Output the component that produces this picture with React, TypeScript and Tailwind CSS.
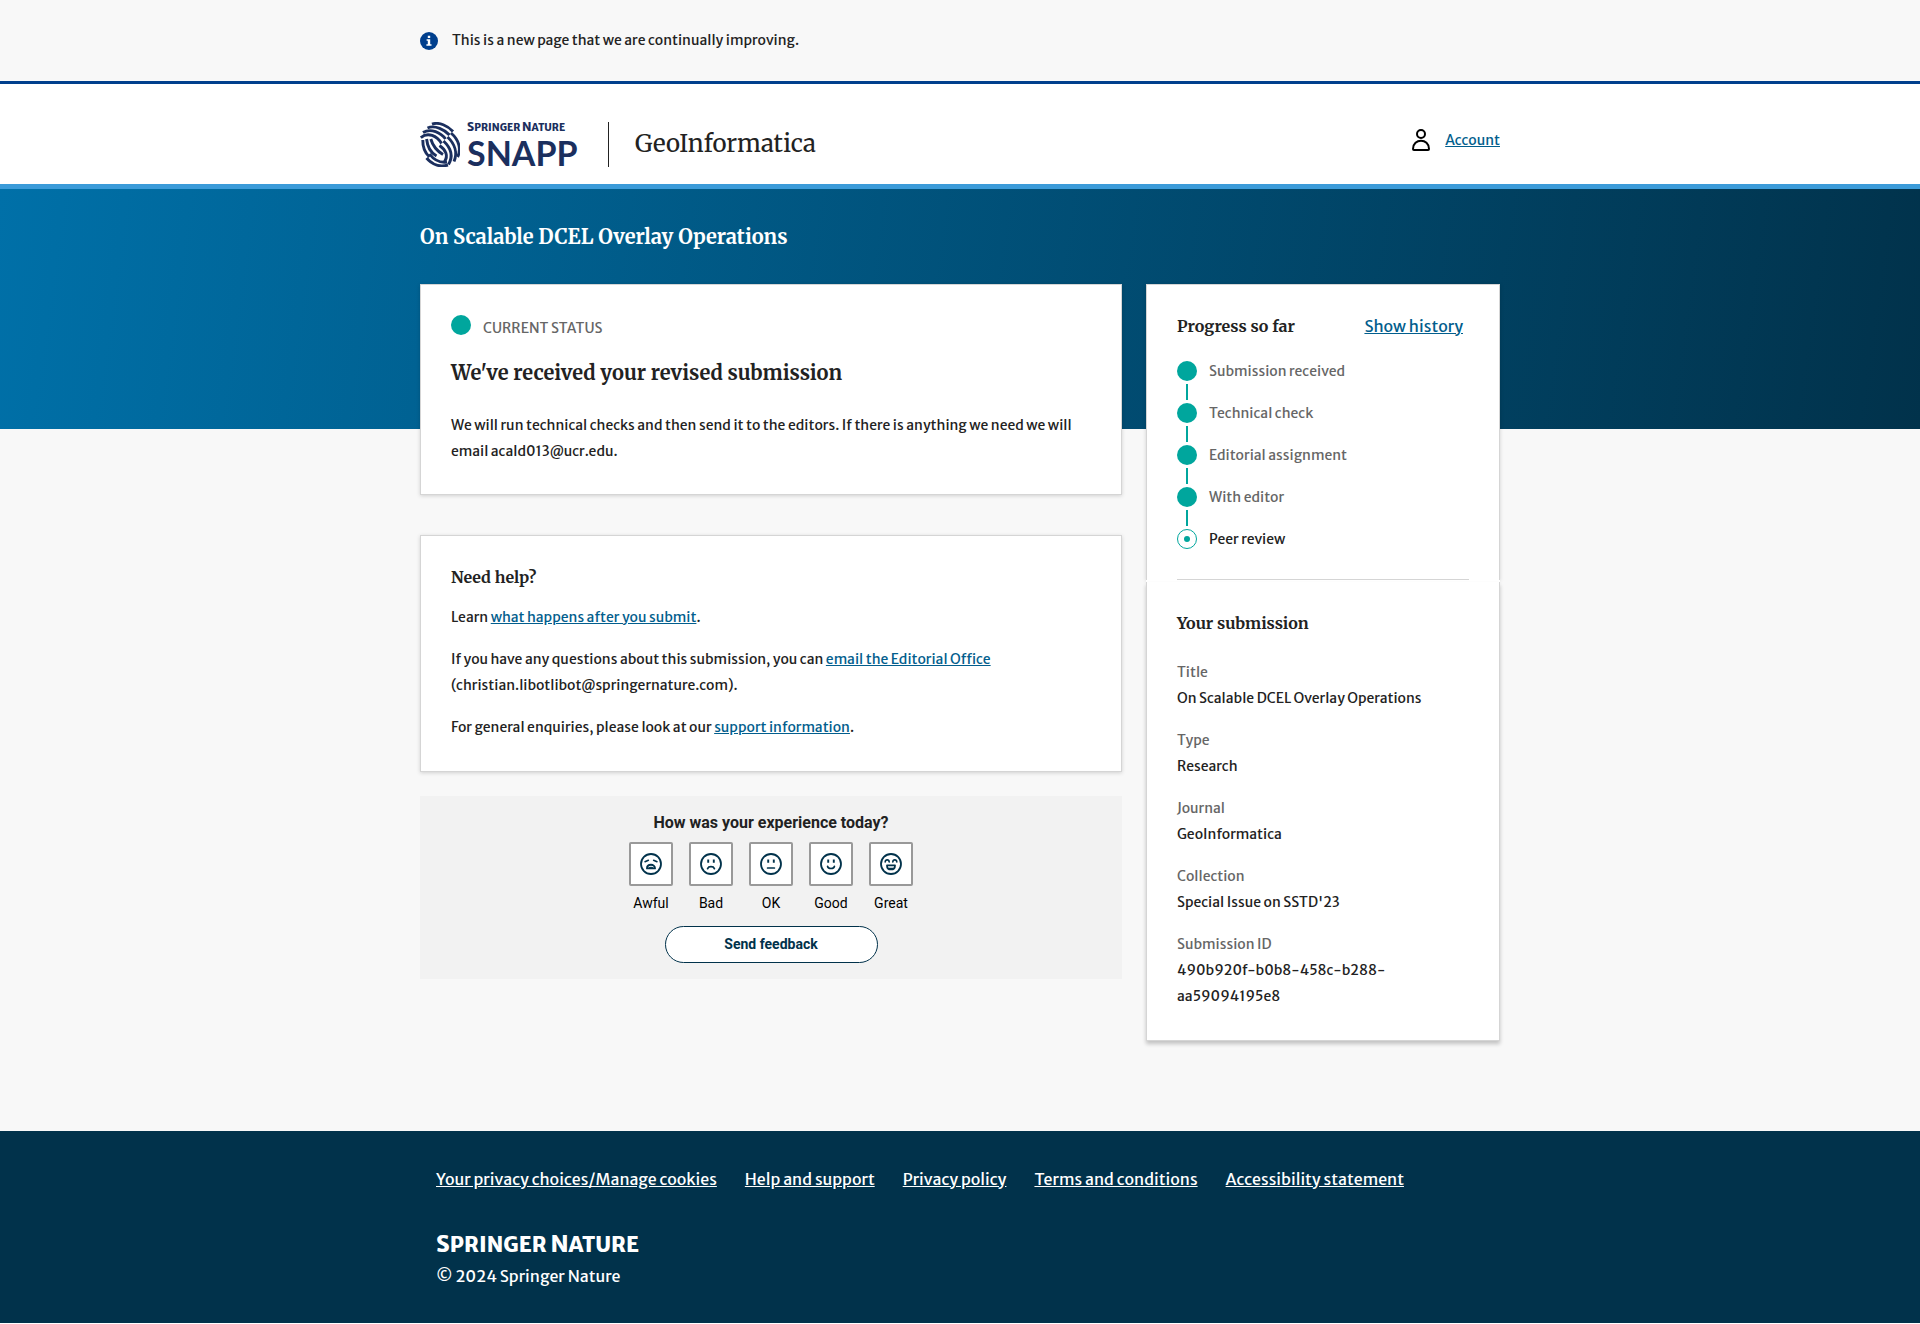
import type { ReactNode } from "react";

const steps = ["Submission received", "Technical check", "Editorial assignment", "With editor", "Peer review"];

const details = [
  { label: "Title", value: "On Scalable DCEL Overlay Operations" },
  { label: "Type", value: "Research" },
  { label: "Journal", value: "GeoInformatica" },
  { label: "Collection", value: "Special Issue on SSTD'23" },
  { label: "Submission ID", value: "490b920f-b0b8-458c-b288-aa59094195e8" },
];

const footerLinks = [
  "Your privacy choices/Manage cookies",
  "Help and support",
  "Privacy policy",
  "Terms and conditions",
  "Accessibility statement",
];

const moods: { name: string; face: ReactNode }[] = [
  {
    name: "Awful",
    face: (
      <>
        <path d="M5 8.8 L8.4 7.2 M17 8.8 L13.6 7.2" strokeWidth="1.5" />
        <path d="M7 15.4 C7 10.6 15 10.6 15 15.4 Z" strokeWidth="1.9" />
        <path d="M9 15.2 C10 13.9 12 13.9 13 15.2" strokeWidth="1.2" />
      </>
    ),
  },
  {
    name: "Bad",
    face: (
      <>
        <path d="M8.2 6.6 V9.8 M13.8 6.6 V9.8" strokeWidth="1.9" strokeLinecap="butt" />
        <path d="M7.6 15.6 C8.6 13 13.4 13 14.4 15.6" strokeWidth="1.7" />
      </>
    ),
  },
  {
    name: "OK",
    face: (
      <>
        <path d="M8.2 6.6 V9.8 M13.8 6.6 V9.8" strokeWidth="1.9" strokeLinecap="butt" />
        <path d="M7.6 15 H14.4" strokeWidth="1.7" />
      </>
    ),
  },
  {
    name: "Good",
    face: (
      <>
        <path d="M8.2 6.6 V9.8 M13.8 6.6 V9.8" strokeWidth="1.9" strokeLinecap="butt" />
        <path d="M7.6 13.4 C8.4 16.2 13.6 16.2 14.4 13.4" strokeWidth="1.7" />
      </>
    ),
  },
  {
    name: "Great",
    face: (
      <>
        <path d="M5.2 9 C5.4 6.2 9 6.2 9.2 9 M12.8 9 C13 6.2 16.6 6.2 16.8 9" strokeWidth="1.6" />
        <path d="M7 12.4 H15 C15 17.8 7 17.8 7 12.4 Z" strokeWidth="1.8" />
        <path d="M9 15.4 H13" strokeWidth="1.2" />
      </>
    ),
  },
];

function InfoIcon() {
  return (
    <svg width="18" height="18" viewBox="0 0 18 18" aria-hidden="true">
      <circle cx="9" cy="9" r="9" fill="#003f8d" />
      <path d="M7.8 3.8 H10.2 V5.9 H7.8 Z M6.6 7.2 H10.2 V12.2 H11.5 V13.8 H6.4 V12.2 H7.8 V8.8 H6.6 Z" fill="#fff" />
    </svg>
  );
}

function UserIcon() {
  return (
    <svg width="18" height="22" viewBox="0 0 18 22" fill="none" stroke="#000" strokeWidth="2" aria-hidden="true">
      <circle cx="9" cy="5" r="4" />
      <path d="M1 20 C1 9 17 9 17 20 Q17 21 16 21 H2 Q1 21 1 20 Z" />
    </svg>
  );
}

function Globe() {
  return (
    <svg width="40" height="45" viewBox="0 0 40 45" fill="none" stroke="#1b2f5e" strokeWidth="2.9" aria-hidden="true">
      <path d="M12 2.2 C19 -0.5 28 4 33 9.5" />
      <path d="M7.5 6 C15 2.6 25 8 29.5 13" />
      <path d="M3 10.6 C11 5.6 21 11 25.5 17" />
      <path d="M0.8 15.6 C8 9.6 17 14 21.5 21.5" />
      <path d="M31 11 C39 18 41.5 27 37.6 35" />
      <path d="M27.5 15 C35 22 37.6 31 34 39.5" />
      <path d="M23.5 19 C31 26 33.5 34 28.5 42.5" />
      <path d="M19.5 23.5 C26 28 28.5 34 24.5 39.5" />
      <path d="M2.8 18 C2.6 26 5 31 9.5 35" />
      <path d="M6.6 17 C7.4 25 11 31 16.5 34" />
      <path d="M10.8 17 C12.5 23 17 29 23 32.5" />
      <path d="M6.5 36 C12 42.5 20 45.5 28 43" />
      <path d="M9.5 32 C14 38 20 41 27 40" />
    </svg>
  );
}

function Card({ children, className = "" }: { children: ReactNode; className?: string }) {
  return (
    <section className={`border border-[#d5d5d5] bg-white px-[30px] shadow-[0_1px_4px_rgba(0,0,0,0.16)] ${className}`}>
      {children}
    </section>
  );
}

function Link({ children }: { children: ReactNode }) {
  return (
    <a href="#" className="text-[#025e8d] underline">
      {children}
    </a>
  );
}

function ProgressSteps() {
  return (
    <ol className="mt-[23px] text-[14px] leading-5">
      {steps.map((step, i) => {
        const last = i === steps.length - 1;
        return (
          <li key={step} className="flex gap-3">
            <span className="flex flex-col items-center">
              {last ? (
                <span className="flex size-5 items-center justify-center rounded-full border border-[#00a69d]">
                  <span className="size-[6px] rounded-full bg-[#00a69d]" />
                </span>
              ) : (
                <>
                  <span className="size-5 rounded-full bg-[#00a69d]" />
                  <span className="my-[3px] h-4 w-[2px] bg-[#00a69d]" />
                </>
              )}
            </span>
            <span className={last ? "text-[#222]" : "text-[#666]"}>{step}</span>
          </li>
        );
      })}
    </ol>
  );
}

export default function App() {
  return (
    <div className="bg-[#f8f8f8] font-['Merriweather_Sans','Noto_Sans',sans-serif] text-[#222]">
      <div className="border-b-[3px] border-[#003f8d]">
        <div className="mx-auto flex h-[81px] max-w-[1080px] items-center gap-[14px] text-[14px]">
          <InfoIcon />
          <p>This is a new page that we are continually improving.</p>
        </div>
      </div>

      <header className="border-b-[5px] border-[#3b9bd9] bg-white">
        <div className="mx-auto flex h-[100px] max-w-[1080px] items-start pt-[38px]">
          <a href="#" aria-label="Springer Nature SNAPP" className="flex gap-[7px] text-[#1b2f5e]">
            <Globe />
            <span className="flex w-[110px] flex-col font-bold">
              <span className="text-[10px] leading-[10px] font-extrabold whitespace-nowrap">
                <span className="text-[12px]">S</span>PRINGER <span className="text-[12px]">N</span>ATURE
              </span>
              <span className="font-['Lato',sans-serif] text-[34px] leading-[40px]">SNAPP</span>
            </span>
          </a>
          <span className="ml-[31px] h-[45px] w-px bg-[#222]" />
          <span className="ml-[26px] font-['Merriweather',serif] text-[24px] leading-[44px]">GeoInformatica</span>
          <a href="#" className="mt-[7px] ml-auto flex items-center gap-[15px] text-[14px] leading-[22px] text-[#025e8d]">
            <UserIcon />
            <span className="underline">Account</span>
          </a>
        </div>
      </header>

      <div className="h-[240px] bg-linear-[98deg,#0070a8,#01324b]">
        <div className="mx-auto max-w-[1080px] pt-8">
          <h1 className="font-['Merriweather',serif] text-[20px] leading-8 font-bold text-white">
            On Scalable DCEL Overlay Operations
          </h1>
        </div>
      </div>

      <main className="mx-auto -mt-[145px] flex max-w-[1080px] items-start gap-6 pb-[90px]">
        <div className="flex min-w-0 flex-1 flex-col">
          <Card className="py-[30px]">
            <p className="flex items-start gap-3 text-[14px] leading-[26px] text-[#666]">
              <span className="size-5 rounded-full bg-[#00a69d]" />
              CURRENT STATUS
            </p>
            <h2 className="mt-4 font-['Merriweather',serif] text-[20px] leading-8 font-bold">
              We've received your revised submission
            </h2>
            <p className="mt-[23px] text-[14px] leading-[26px]">
              We will run technical checks and then send it to the editors. If there is anything we need we will email
              acald013@ucr.edu.
            </p>
          </Card>

          <Card className="mt-10 pt-[29px] pb-[31px]">
            <h2 className="font-['Merriweather',serif] text-[16px] leading-6 font-bold">Need help?</h2>
            <div className="mt-[15px] space-y-4 text-[14px] leading-[26px]">
              <p>
                Learn <Link>what happens after you submit</Link>.
              </p>
              <p>
                If you have any questions about this submission, you can <Link>email the Editorial Office</Link>{" "}
                (christian.libotlibot@springernature.com).
              </p>
              <p>
                For general enquiries, please look at our <Link>support information</Link>.
              </p>
            </div>
          </Card>

          <form className="mt-6 flex flex-col items-center bg-[#f2f2f2] py-4 font-['Roboto',sans-serif]">
            <fieldset className="flex flex-col items-center">
              <legend className="mx-auto text-[16px] leading-[22px] font-bold">How was your experience today?</legend>
              <div className="mt-2 flex">
                {moods.map((mood) => (
                  <label key={mood.name} className="flex w-[60px] flex-col items-center text-[14px] text-black">
                    <input type="radio" name="experience" className="sr-only" />
                    <span className="flex size-11 items-center justify-center rounded-[2px] border-2 border-[#999] bg-white">
                      <svg
                        width="22"
                        height="22"
                        viewBox="0 0 22 22"
                        fill="none"
                        stroke="#01324b"
                        strokeLinecap="round"
                        strokeLinejoin="round"
                        aria-hidden="true"
                      >
                        <circle cx="11" cy="11" r="10" strokeWidth="1.8" />
                        {mood.face}
                      </svg>
                    </span>
                    <span className="mt-[7px] leading-5">{mood.name}</span>
                  </label>
                ))}
              </div>
            </fieldset>
            <button
              type="button"
              className="mt-[13px] h-[37px] w-[213px] rounded-full border border-[#01324b] bg-white text-[14px] font-bold text-[#01324b]"
            >
              Send feedback
            </button>
          </form>
        </div>

        <aside className="w-[354px] shrink-0">
          <Card className="border-b-0 pt-[29px]">
            <div className="flex items-center justify-between pr-[6px]">
              <h2 className="font-['Merriweather',serif] text-[16px] leading-6 font-bold">Progress so far</h2>
              <button type="button" className="text-[16px] leading-6 text-[#025e8d] underline">
                Show history
              </button>
            </div>
            <ProgressSteps />
            <hr className="mt-[30px] border-[#d5d5d5]" />
          </Card>
          <div className="h-[2px] bg-white" />
          <Card className="border-t-0 pt-[29px] pb-[31px] shadow-[0_3px_4px_rgba(0,0,0,0.22)]">
            <h2 className="font-['Merriweather',serif] text-[16px] leading-6 font-bold">Your submission</h2>
            <dl className="mt-6 space-y-4 text-[14px] leading-[26px]">
              {details.map((d) => (
                <div key={d.label}>
                  <dt className="text-[#666]">{d.label}</dt>
                  <dd>{d.value}</dd>
                </div>
              ))}
            </dl>
          </Card>
        </aside>
      </main>

      <footer className="bg-[#01324b] text-white">
        <div className="mx-auto max-w-[1080px] px-4 pt-9 pb-[33px]">
          <ul className="flex flex-wrap gap-x-7 text-[16px] leading-6">
            {footerLinks.map((text) => (
              <li key={text}>
                <a href="#" className="underline">
                  {text}
                </a>
              </li>
            ))}
          </ul>
          <p className="mt-[39px] text-[21px] leading-7 font-extrabold">
            <span className="text-[23px]">S</span>PRINGER <span className="text-[23px]">N</span>ATURE
          </p>
          <p className="mt-[3px] text-[16px] leading-7">© 2024 Springer Nature</p>
        </div>
      </footer>
    </div>
  );
}
